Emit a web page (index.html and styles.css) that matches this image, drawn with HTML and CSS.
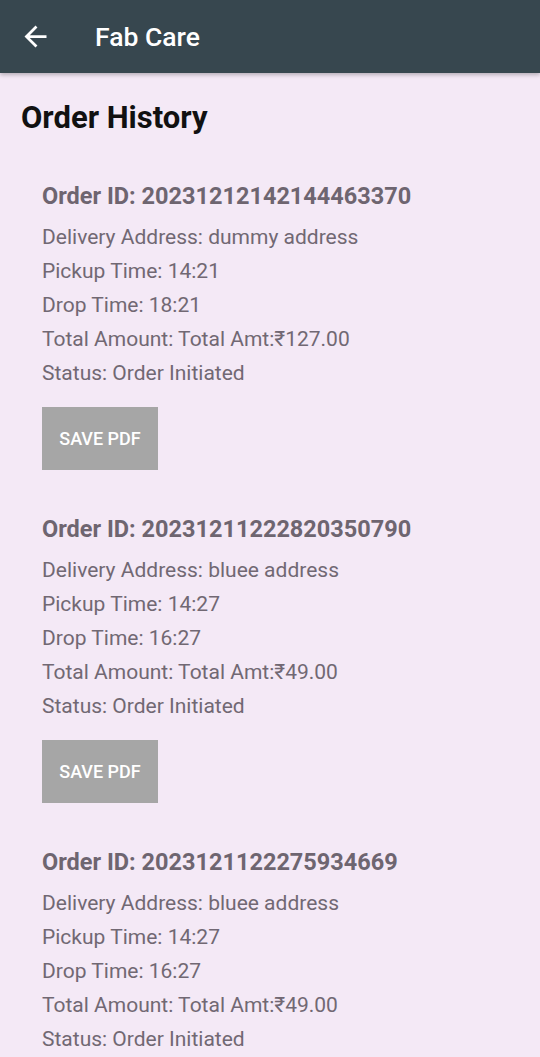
FILE: index.html
```html
<!DOCTYPE html>
<html>
<head>
<meta charset="utf-8">
<link rel="stylesheet" href="styles.css">
</head>
<body>
<header class="toolbar">
  <svg class="back" viewBox="0 0 24 24"><path d="M20 11H7.83l5.59-5.59L12 4l-8 8 8 8 1.41-1.41L7.83 13H20v-2z" fill="#fff"/></svg>
  <span class="app-title">Fab Care</span>
</header>
<main class="content">
  <h1 class="page-title">Order History</h1>
  <section class="order">
    <div class="order-id">Order ID: 20231212142144463370</div>
    <div class="line">Delivery Address: dummy address</div>
    <div class="line">Pickup Time: 14:21</div>
    <div class="line">Drop Time: 18:21</div>
    <div class="line">Total Amount: Total Amt:₹127.00</div>
    <div class="line">Status: Order Initiated</div>
    <button class="save">SAVE PDF</button>
  </section>
  <section class="order">
    <div class="order-id">Order ID: 20231211222820350790</div>
    <div class="line">Delivery Address: bluee address</div>
    <div class="line">Pickup Time: 14:27</div>
    <div class="line">Drop Time: 16:27</div>
    <div class="line">Total Amount: Total Amt:₹49.00</div>
    <div class="line">Status: Order Initiated</div>
    <button class="save">SAVE PDF</button>
  </section>
  <section class="order">
    <div class="order-id">Order ID: 2023121122275934669</div>
    <div class="line">Delivery Address: bluee address</div>
    <div class="line">Pickup Time: 14:27</div>
    <div class="line">Drop Time: 16:27</div>
    <div class="line">Total Amount: Total Amt:₹49.00</div>
    <div class="line">Status: Order Initiated</div>
  </section>
</main>
</body>
</html>
```
FILE: styles.css
```css
html, body {
  margin: 0;
  padding: 0;
}
body {
  background: #f4e9f6;
  font-family: Roboto, "Noto Sans", sans-serif;
  width: 540px;
  height: 1057px;
  overflow: hidden;
}
.toolbar {
  height: 73px;
  background: #37474f;
  display: flex;
  align-items: center;
  padding-left: 19px;
  box-shadow: 0 2px 4px rgba(0, 0, 0, 0.25);
  position: relative;
  z-index: 1;
}
.back {
  width: 33px;
  height: 33px;
  flex: none;
}
.app-title {
  color: #fff;
  font-size: 26.5px;
  font-weight: 500;
  margin-left: 43px;
}
.content {
  padding: 25px 0 0 21px;
}
.page-title {
  margin: 0;
  font-size: 31px;
  font-weight: 700;
  color: #111;
  line-height: 40px;
}
.order {
  padding-left: 21px;
  display: flex;
  flex-direction: column;
  align-items: flex-start;
}
.page-title + .order {
  margin-top: 41px;
}
.order-id {
  font-size: 23.5px;
  font-weight: 700;
  color: #6e6570;
  line-height: 34px;
  margin-bottom: 7px;
}
.line {
  font-size: 21px;
  color: #716873;
  line-height: 34px;
}
.save {
  margin-top: 17px;
  margin-bottom: 42px;
  width: 116px;
  height: 63px;
  border: none;
  background: #a6a6a6;
  color: #fff;
  font-family: Roboto, sans-serif;
  font-size: 18px;
  font-weight: 500;
  padding: 0;
}
```
